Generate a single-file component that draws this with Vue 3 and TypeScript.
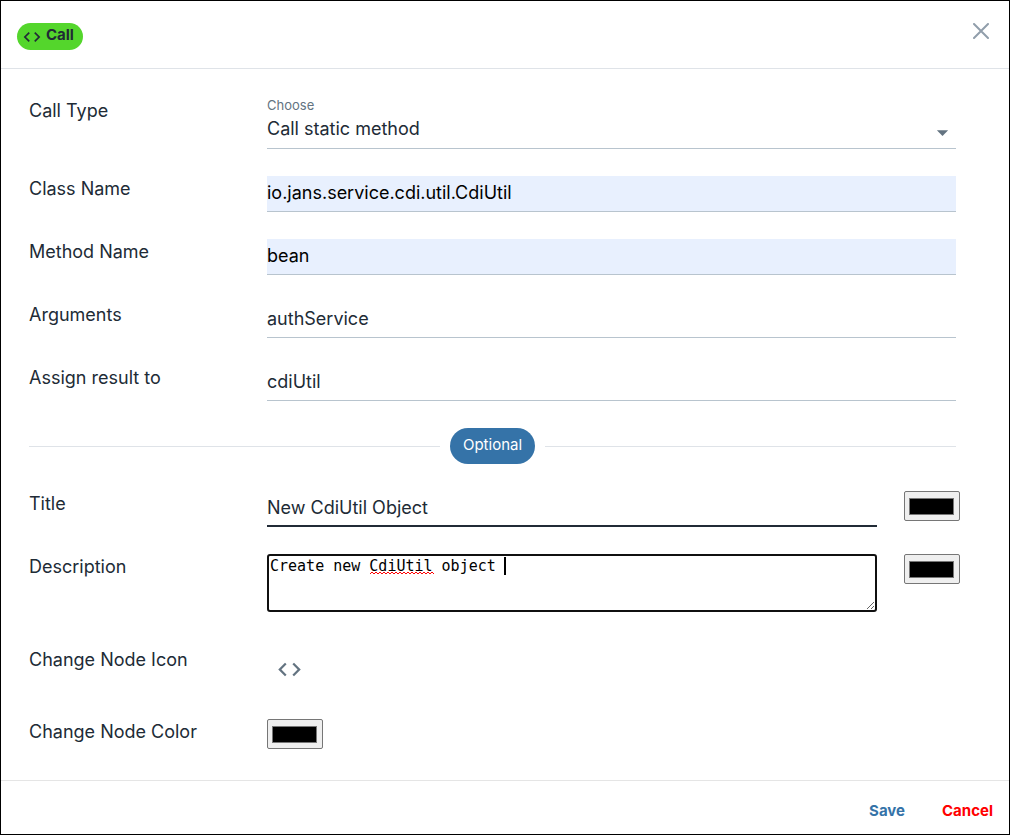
<script setup lang="ts">
import { reactive, ref } from 'vue'

interface TextField {
  id: string
  label: string
  value: string
  autofilled: boolean
}

const callTypes: string[] = ['Call static method', 'Call instance method']
const callType = ref<string>(callTypes[0])

const fields = reactive<TextField[]>([
  { id: 'class-name', label: 'Class Name', value: 'io.jans.service.cdi.util.CdiUtil', autofilled: true },
  { id: 'method-name', label: 'Method Name', value: 'bean', autofilled: true },
  { id: 'arguments', label: 'Arguments', value: 'authService', autofilled: false },
  { id: 'assign-result', label: 'Assign result to', value: 'cdiUtil', autofilled: false },
])

const title = ref('New CdiUtil Object')
const description = ref('Create new CdiUtil object ')
const titleColor = ref('#000000')
const descriptionColor = ref('#000000')
const nodeColor = ref('#000000')
</script>

<template>
  <form class="dialog" @submit.prevent>
    <header class="header">
      <span class="badge">
        <svg class="badge-icon" viewBox="0 0 24 24" aria-hidden="true">
          <path d="M9.4 16.6 4.8 12l4.6-4.6L8 6l-6 6 6 6zm5.2 0 4.6-4.6-4.6-4.6L16 6l6 6-6 6z" />
        </svg>
        <span class="badge-text">Call</span>
      </span>
      <button class="close" type="button" aria-label="Close">
        <svg viewBox="0 0 16 16" aria-hidden="true">
          <path d="M1 1l14 14M15 1L1 15" />
        </svg>
      </button>
    </header>

    <main class="body">
      <div class="row">
        <label class="label" for="call-type">Call Type</label>
        <div class="choice">
          <span class="hint">Choose</span>
          <select id="call-type" v-model="callType" class="select">
            <option v-for="type in callTypes" :key="type">{{ type }}</option>
          </select>
          <svg class="arrow" viewBox="0 0 24 24" aria-hidden="true"><path d="M7 10l5 5 5-5z" /></svg>
        </div>
      </div>

      <div v-for="field in fields" :key="field.id" class="row">
        <label class="label" :for="field.id">{{ field.label }}</label>
        <input :id="field.id" v-model="field.value" class="input" :class="{ autofilled: field.autofilled }" type="text" />
      </div>

      <div class="divider"><span class="pill">Optional</span></div>

      <div class="row with-color">
        <label class="label" for="title">Title</label>
        <input id="title" v-model="title" class="input active" type="text" />
        <input v-model="titleColor" class="color" type="color" aria-label="Title color" />
      </div>

      <div class="row with-color">
        <label class="label" for="description">Description</label>
        <div class="description">
          <textarea id="description" v-model="description" class="textarea" spellcheck="false"></textarea>
          <svg class="squiggle" viewBox="0 0 64 4" aria-hidden="true">
            <path d="M0 3l2-2 2 2 2-2 2 2 2-2 2 2 2-2 2 2 2-2 2 2 2-2 2 2 2-2 2 2 2-2 2 2 2-2 2 2 2-2 2 2 2-2 2 2 2-2 2 2 2-2 2 2 2-2 2 2 2-2 2 2 2-2 2 2" />
          </svg>
          <span class="caret"></span>
        </div>
        <input v-model="descriptionColor" class="color" type="color" aria-label="Description color" />
      </div>

      <div class="row">
        <span id="icon-label" class="label">Change Node Icon</span>
        <button class="icon-button" type="button" aria-labelledby="icon-label">
          <svg viewBox="0 0 24 24" aria-hidden="true">
            <path d="M9.4 16.6 4.8 12l4.6-4.6L8 6l-6 6 6 6zm5.2 0 4.6-4.6-4.6-4.6L16 6l6 6-6 6z" />
          </svg>
        </button>
      </div>

      <div class="row">
        <label class="label" for="node-color">Change Node Color</label>
        <input id="node-color" v-model="nodeColor" class="color" type="color" />
      </div>
    </main>

    <footer class="footer">
      <button class="action save" type="submit">Save</button>
      <button class="action cancel" type="button">Cancel</button>
    </footer>
  </form>
</template>

<style>
body {
  background: #fff;
}
</style>

<style scoped>
.dialog,
.dialog * {
  box-sizing: border-box;
}

.dialog {
  display: flex;
  flex-direction: column;
  min-height: 100vh;
  border: 1px solid #000;
  color: #212b36;
  font-family: Inter, 'Liberation Sans', sans-serif;
  font-size: 18px;
  line-height: 26px;
}

button {
  padding: 0;
  border: 0;
  background: none;
  font-family: inherit;
  cursor: pointer;
}

svg {
  display: block;
  fill: currentColor;
}

.header {
  display: flex;
  align-items: flex-start;
  justify-content: space-between;
  padding: 22px 20px 18px 16px;
  border-bottom: 1px solid #dfe3e8;
}

.badge {
  display: flex;
  align-items: center;
  gap: 4px;
  height: 27px;
  padding: 0 9px 0 5px;
  border-radius: 14px;
  background: #54d62c;
  font-size: 15px;
  font-weight: 700;
}

.badge-icon {
  width: 20px;
  height: 20px;
}

.badge-text {
  line-height: 20px;
  padding-bottom: 3px;
}

.close {
  width: 16px;
  height: 16px;
  color: #919eab;
}

.close path {
  fill: none;
  stroke: currentColor;
  stroke-width: 2;
  stroke-linecap: round;
}

.body {
  display: flex;
  flex: 1;
  flex-direction: column;
  gap: 27px;
  padding: 29px 53px 30px 28px;
}

.row {
  display: grid;
  grid-template-columns: 238px minmax(0, 1fr);
  align-items: start;
}

.row.with-color {
  grid-template-columns: 238px minmax(0, 1fr) 27px 52px;
}

.with-color .color {
  grid-column: 4;
}

.choice {
  position: relative;
  display: flex;
  flex-direction: column;
  height: 51px;
  border-bottom: 1px solid #b8c4ce;
}

.hint {
  color: #637381;
  font-size: 13px;
  line-height: 14px;
}

.select {
  width: 100%;
  height: 34px;
  padding: 0;
  border: 0;
  outline: 0;
  appearance: none;
  background: none;
  color: inherit;
  font: inherit;
}

.arrow {
  position: absolute;
  top: 21px;
  right: 0;
  width: 27px;
  height: 27px;
  color: #637381;
  pointer-events: none;
}

.input {
  width: 100%;
  height: 36px;
  padding: 0 0 3px;
  border: 0;
  border-bottom: 1px solid #b8c4ce;
  border-radius: 0;
  outline: 0;
  background: #fff;
  color: inherit;
  font: inherit;
}

.input.autofilled {
  background: #e8f0fe;
  color: #000;
}

.input.active {
  padding-bottom: 1px;
  border-bottom: 2px solid #212b36;
}

.divider {
  display: flex;
  align-items: center;
  gap: 10px;
}

.divider::before,
.divider::after {
  flex: 1;
  height: 1px;
  background: #dfe3e8;
  content: '';
}

.pill {
  padding: 4px 13px 6px;
  border-radius: 18px;
  background: #3573a8;
  color: #fff;
  font-size: 15px;
}

.description {
  position: relative;
  height: 66px;
}

.textarea {
  display: block;
  width: 100%;
  height: 58px;
  padding: 1px;
  border: 2px solid #101010;
  border-radius: 3px;
  outline: 0;
  background: #fff;
  color: #000;
  font-family: 'DejaVu Sans Mono', monospace;
  font-size: 15px;
  line-height: 18px;
  resize: both;
}

.squiggle {
  position: absolute;
  top: 17px;
  left: 103px;
  width: 64px;
  height: 4px;
}

.squiggle path {
  fill: none;
  stroke: #f00;
  stroke-width: 1;
}

.caret {
  position: absolute;
  top: 3px;
  left: 237px;
  width: 2px;
  height: 18px;
  background: #000;
}

.color {
  width: 56px;
  height: 30px;
  padding: 6px 5px 5px 4px;
  border: 1px solid #767676;
  border-radius: 2px;
  appearance: none;
  background: #efefef;
}

.color::-webkit-color-swatch-wrapper {
  padding: 0;
}

.color::-webkit-color-swatch {
  border: 1px solid #777;
  border-radius: 0;
}

.icon-button {
  display: grid;
  place-items: center;
  width: 45px;
  height: 45px;
  color: #637381;
}

.icon-button svg {
  width: 27px;
  height: 27px;
}

.footer {
  display: flex;
  justify-content: flex-end;
  gap: 37px;
  padding: 17px 16px 10px;
  border-top: 1px solid #e5e5e5;
}

.action {
  font-size: 15px;
  font-weight: 700;
  line-height: 26px;
}

.save {
  color: #3573a8;
}

.cancel {
  color: #f00;
}
</style>
